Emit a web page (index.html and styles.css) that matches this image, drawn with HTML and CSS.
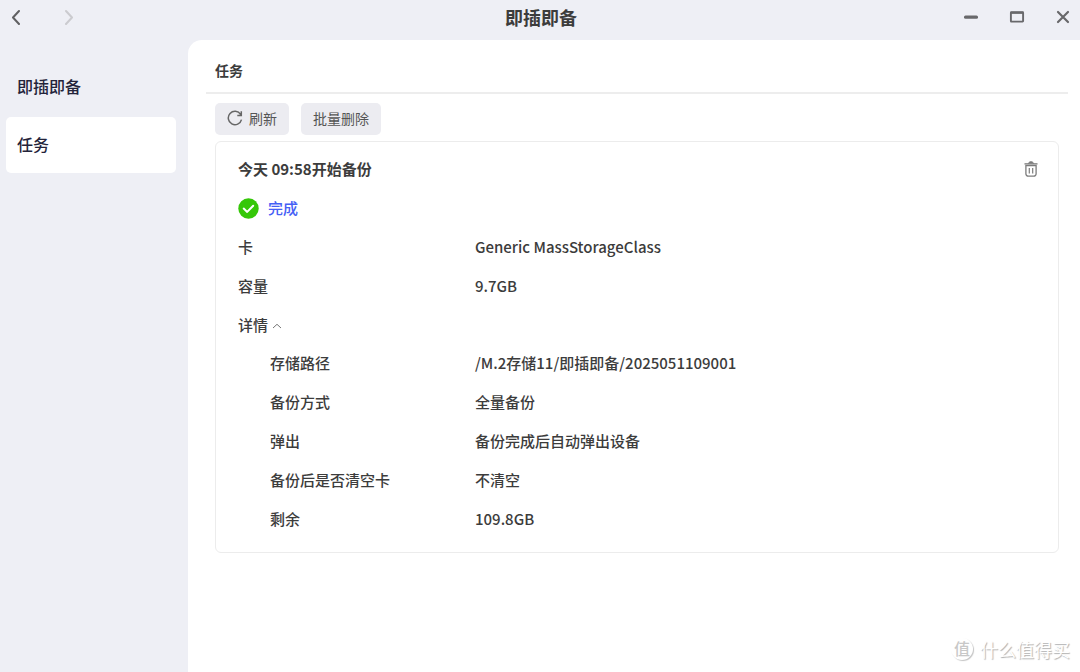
FILE: index.html
```
<!DOCTYPE html>
<html lang="zh-CN">
<head>
<meta charset="utf-8">
<meta name="viewport" content="width=device-width, initial-scale=1">
<title>即插即备</title>
<link rel="stylesheet" href="styles.css">
</head>
<body>
<div class="window">
  <header class="titlebar">
    <div class="history">
      <button class="icon-button" type="button" aria-label="后退">
        <svg width="10" height="16" viewBox="0 0 10 16"><path d="M8 2 2 8.500 8 15" fill="none" stroke="#606062" stroke-width="2" stroke-linecap="round" stroke-linejoin="round"/></svg>
      </button>
      <button class="icon-button" type="button" aria-label="前进" disabled>
        <svg width="10" height="16" viewBox="0 0 10 16"><path d="M2 2 8 8.500 2 15" fill="none" stroke="#cbcbcf" stroke-width="2" stroke-linecap="round" stroke-linejoin="round"/></svg>
      </button>
    </div>
    <h1 class="app-title">即插即备</h1>
    <div class="window-controls">
      <button class="icon-button" type="button" aria-label="最小化">
        <svg width="16" height="16" viewBox="0 0 16 16"><rect x="1" y="6.500" width="14" height="3.200" rx="1.500" fill="#68686b"/></svg>
      </button>
      <button class="icon-button" type="button" aria-label="最大化">
        <svg width="16" height="16" viewBox="0 0 16 16"><rect x="1.900" y="3.400" width="12.200" height="9.200" rx="0.500" fill="none" stroke="#68686b" stroke-width="1.900"/><path d="M1.500 3.600h13" stroke="#68686b" stroke-width="2.500"/></svg>
      </button>
      <button class="icon-button" type="button" aria-label="关闭">
        <svg width="16" height="16" viewBox="0 0 16 16"><path d="m3 3 10 10M13 3 3 13" stroke="#68686b" stroke-width="2.200" stroke-linecap="round"/></svg>
      </button>
    </div>
  </header>

  <div class="body">
    <nav class="sidebar">
      <a class="nav-item" href="#backup">即插即备</a>
      <a class="nav-item nav-item-active" href="#tasks" aria-current="page">任务</a>
    </nav>

    <main class="content">
      <h2 class="page-title">任务</h2>
      <div class="page-body">
        <div class="toolbar">
          <button class="tool-button" type="button">
            <svg width="16" height="16" viewBox="0 0 16 16"><path d="M13.600 4.300A6.700 6.700 0 1 0 14.500 9.600M14.300 1.300v4.100h-4" fill="none" stroke="#666" stroke-width="1.500"/></svg>
            刷新
          </button>
          <button class="tool-button" type="button">批量删除</button>
        </div>

        <article class="card">
          <div class="card-head">
            <h3 class="card-title">今天 09:58开始备份</h3>
            <button class="icon-button" type="button" aria-label="删除">
              <svg width="16" height="18" viewBox="0 0 16 18"><g fill="none" stroke="#7c7c7c"><path d="M1.500 3.900h13" stroke-width="1.400"/><path d="M5.500 3.500C5.700 1.200 10.300 1.200 10.500 3.500" fill="#7c7c7c"/><path d="M2.900 5.600h10.200v8.200a2.300 2.300 0 0 1-2.300 2.300H5.200a2.300 2.300 0 0 1-2.300-2.300z" stroke-width="1.300"/><path d="M6.300 8v5.600M9.700 8v5.600" stroke-width="1.200"/></g></svg>
            </button>
          </div>
          <p class="status">
            <svg width="21" height="21" viewBox="0 0 21 21"><circle cx="10.500" cy="10.500" r="10.200" fill="#35c708"/><path d="m5.700 10.600 3.500 3.300 6-6.200" fill="none" stroke="#fff" stroke-width="2" stroke-linecap="round" stroke-linejoin="round"/></svg>
            完成
          </p>
          <dl class="facts">
            <dt>卡</dt><dd>Generic MassStorageClass</dd>
            <dt>容量</dt><dd>9.7GB</dd>
          </dl>
          <div class="details">
            <button class="details-toggle" type="button" aria-expanded="true" aria-controls="details">
              详情
              <svg width="10" height="10" viewBox="0 0 10 10"><path d="M1 8 5 4.300 9 8" fill="none" stroke="#777" stroke-width="1"/></svg>
            </button>
            <dl class="facts facts-nested" id="details">
              <dt>存储路径</dt><dd>/M.2存储11/即插即备/2025051109001</dd>
              <dt>备份方式</dt><dd>全量备份</dd>
              <dt>弹出</dt><dd>备份完成后自动弹出设备</dd>
              <dt>备份后是否清空卡</dt><dd>不清空</dd>
              <dt>剩余</dt><dd>109.8GB</dd>
            </dl>
          </div>
        </article>
      </div>
    </main>
  </div>

  <div class="watermark">
    <span class="watermark-badge">值</span>
    <span>什么值得买</span>
  </div>
</div>
</body>
</html>
```
FILE: styles.css
```
* {
  box-sizing: border-box;
}

body,
h1,
h2,
h3,
p,
dl,
dd {
  margin: 0;
}

body {
  background: #eeeff5;
  color: #3c3c3c;
  font-family: "Noto Sans CJK SC", sans-serif;
  font-size: 15px;
  font-weight: 500;
  line-height: 22px;
}

button {
  padding: 0;
  border: 0;
  background: none;
  color: inherit;
  font: inherit;
}

svg {
  display: block;
  flex: none;
}

.window {
  position: relative;
  display: flex;
  flex-direction: column;
  min-height: 100vh;
}

.titlebar {
  display: grid;
  grid-template-columns: 1fr auto 1fr;
  align-items: center;
  padding: 0 9px 6px 11px;
  min-height: 40px;
}

.history {
  display: flex;
  gap: 43px;
}

.app-title {
  font-size: 18px;
  font-weight: 700;
  line-height: 24px;
}

.window-controls {
  display: flex;
  justify-content: flex-end;
  gap: 30px;
}

.body {
  display: flex;
  flex: 1;
}

.sidebar {
  display: flex;
  flex: 0 0 188px;
  flex-direction: column;
  gap: 2px;
  padding: 19px 12px 0 6px;
}

.nav-item {
  padding: 16px 11px 18px;
  border-radius: 5px;
  color: #23233a;
  font-size: 16px;
  text-decoration: none;
}

.nav-item-active {
  background: #fff;
}

.content {
  flex: 1;
  min-width: 0;
  padding: 19px 12px 20px 18px;
  border-top-left-radius: 14px;
  background: #fff;
}

.page-title {
  padding: 0 9px 11px;
  border-bottom: 2px solid #ededed;
  font-size: 14px;
  font-weight: 700;
}

.page-body {
  padding: 9px 9px 0;
}

.toolbar {
  display: flex;
  gap: 12px;
}

.tool-button {
  display: flex;
  align-items: center;
  gap: 6px;
  padding: 4px 12px 6px;
  border-radius: 5px;
  background: #ececf1;
  color: #555;
  font-size: 14px;
  font-weight: 400;
}

.card {
  display: flex;
  flex-direction: column;
  gap: 17px;
  margin-top: 6px;
  padding: 16px 19px 22px 22px;
  border: 1px solid #ececec;
  border-radius: 6px;
}

.card-head {
  display: flex;
  align-items: center;
  justify-content: space-between;
}

.card-title {
  font-size: 15px;
  font-weight: 700;
}

.status {
  display: flex;
  align-items: center;
  gap: 9px;
  color: #4560f5;
}

.facts {
  display: grid;
  grid-template-columns: 237px 1fr;
  row-gap: 17px;
}

.details {
  display: flex;
  flex-direction: column;
  gap: 16px;
}

.facts-nested {
  grid-template-columns: 205px 1fr;
  padding-left: 32px;
}

.details-toggle {
  display: flex;
  align-items: center;
  align-self: flex-start;
  gap: 4px;
}

.watermark {
  position: absolute;
  right: 10px;
  bottom: 11px;
  display: flex;
  align-items: center;
  gap: 7px;
  color: #fff;
  font-size: 18px;
  font-weight: 400;
  line-height: 24px;
  text-shadow: 1px 1px 1px #b0b0b0;
}

.watermark-badge {
  width: 22px;
  height: 22px;
  border-radius: 50%;
  box-shadow: 1px 1px 1px #c4c4c4;
  color: #c8c8c8;
  font-size: 16px;
  font-weight: 500;
  line-height: 20px;
  text-align: center;
  text-shadow: none;
}
```
